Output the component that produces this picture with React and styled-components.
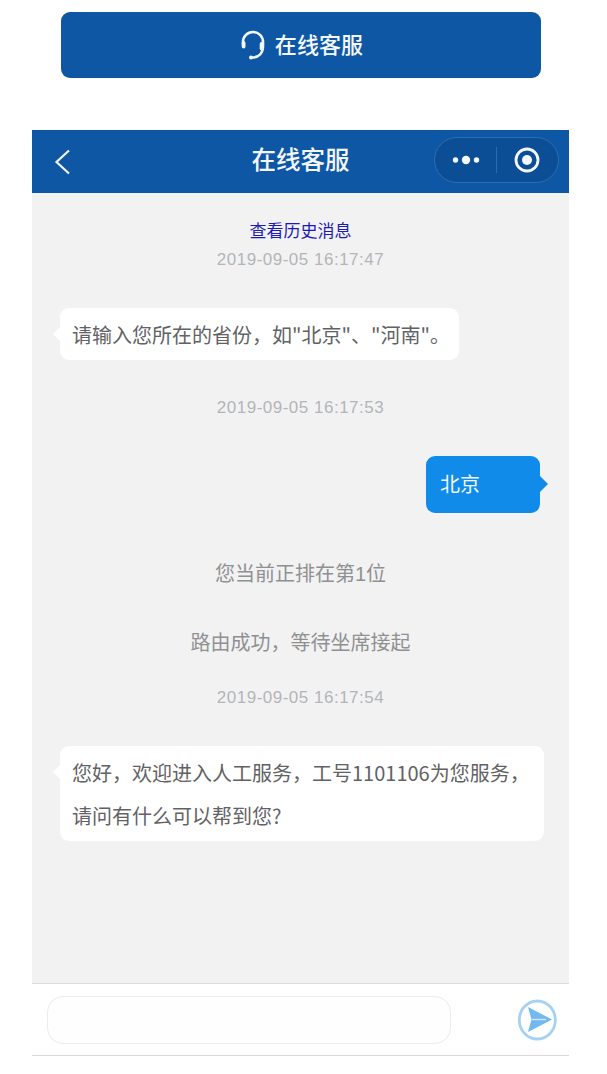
import React from "react";
import styled, { createGlobalStyle } from "styled-components";

const COMMA = "\uFF0C";

const Global = createGlobalStyle`
  html, body { margin: 0; padding: 0; background: #fff; }
  body { font-family: "Liberation Sans", "Noto Sans CJK SC", sans-serif; }
  * { box-sizing: border-box; }
`;
const Page = styled.div`
  width: 607px; height: 1074px; overflow: hidden; display: flex; flex-direction: column; align-items: flex-start; background: #fff;
  padding-top: 12px;
`;
const TopButton = styled.div`
  width: 480px; height: 66px; margin-left: 61px; background: #0e57a5; border-radius: 9px; display: flex; align-items: center; justify-content: center; gap: 10px;
  color: #f4f7fb; font: 500 22px/30px "Noto Sans CJK SC", sans-serif;
`;
const ButtonLabel = styled.span`
  display: block; margin-bottom: 5px; letter-spacing: 0.1px;
`;
const HeadsetIcon = styled.svg`
  width: 26px; height: 30px; flex: none;
`;
const Phone = styled.div`
  width: 537px; height: 926px; margin-top: 52px; margin-left: 32px; display: flex; flex-direction: column;
`;
const Nav = styled.div`
  height: 63px; background: #0e57a5; display: flex; align-items: center; position: relative; flex: none;
`;
const Back = styled.svg`
  margin-left: 22px; width: 18px; height: 28px; flex: none; margin-top: 1px;
`;
const NavTitle = styled.div`
  position: absolute; left: 0; right: 0; top: 11px; text-align: center; color: #f3f6fa;
  font: 500 24.5px/36px "Noto Sans CJK SC", sans-serif;
`;
const Capsule = styled.div`
  margin-left: auto; margin-right: 10px; margin-top: -4px; width: 125px; height: 46px; border-radius: 23px; background: #0c4e95; border: 1px solid #2b6cb0;
  display: flex; align-items: center; position: relative;
`;
const Dots = styled.svg`
  width: 61px; height: 44px; flex: none;
`;
const Divider = styled.div`
  width: 1px; height: 26px; background: #2d6bad; flex: none;
`;
const Target = styled.svg`
  width: 61px; height: 44px; flex: none;
`;
const Chat = styled.div`
  flex: 1; background: #f2f2f3; display: flex; flex-direction: column; align-items: center; padding-top: 26px; position: relative;
`;
const HistoryLink = styled.div`
  color: #1a1ab4; font: 400 17px/22px "Noto Sans CJK SC", sans-serif; height: 22px;
`;
const Time = styled.div`
  color: #b3b5b8; font: 400 17px/24px "Liberation Sans", sans-serif; letter-spacing: 0.5px; height: 24px; margin-top: ${p => p.$mt}px;
`;
const LeftBubble = styled.div`
  align-self: flex-start; margin-left: 28px; margin-top: ${p => p.$mt}px; width: ${p => p.$w}px; background: #fff; border-radius: 9px; color: #626265;
  font: 400 20px/43px "Noto Sans CJK SC", "Liberation Sans", sans-serif; padding: 4.5px 0 4.5px 12px; position: relative; white-space: nowrap;
  &::before {
    content: ""; position: absolute; left: -7px; top: ${p => p.$arrow}px; border: 7px solid transparent; border-left: 0; border-right: 7px solid #fff;
  }
`;
const RightBubble = styled.div`
  align-self: flex-end; margin-right: 29px; margin-top: 36px; width: 114px; height: 57px; background: #118bea; border-radius: 9px; color: #f1f8fe;
  font: 400 20px/56px "Noto Sans CJK SC", sans-serif; padding-left: 14px; position: relative;
  &::after {
    content: ""; position: absolute; right: -8px; top: 20px; border: 8px solid transparent; border-right: 0; border-left: 8px solid #118bea;
  }
`;
const System = styled.div`
  color: #8f9092; font: 400 20px/30px "Liberation Sans", "Noto Sans CJK SC", sans-serif; height: 30px; margin-top: ${p => p.$mt}px;
`;
const InputBar = styled.div`
  height: 73px; flex: none; background: #fff; border-top: 1px solid #dcdbde; border-bottom: 1px solid #d9d9db; display: flex; align-items: center; padding-left: 15px;
`;
const Field = styled.div`
  width: 404px; height: 48px; border: 1px solid #ebebee; border-radius: 16px; background: #fefefe; margin-top: 1px;
`;
const Send = styled.svg`
  width: 42px; height: 42px; margin-left: 64px; margin-top: 1px; flex: none;
`;

export default function App() {
  return (
    <Page>
      <Global />
      <TopButton>
        <HeadsetIcon viewBox="0 0 26 30" fill="none" stroke="#f4f7fb" strokeWidth="2.6" strokeLinecap="round">
          <path d="M4 14 V12 A10 10 0 0 1 24 12 V16 C24 23 20 27.5 13 27.5" />
          <path d="M4.6 13 V16.5" strokeWidth="3.8" />
          <path d="M22.6 14 V18.5" strokeWidth="3.8" />
          <circle cx="12" cy="27.5" r="2" fill="#f4f7fb" stroke="none" />
        </HeadsetIcon>
        <ButtonLabel>在线客服</ButtonLabel>
      </TopButton>
      <Phone>
        <Nav>
          <Back viewBox="0 0 18 28" fill="none" stroke="#f3f6fa" strokeWidth="2.2">
            <path d="M15 2.5 L2.5 14 L15 25.5" />
          </Back>
          <NavTitle>在线客服</NavTitle>
          <Capsule>
            <Dots viewBox="0 0 61 44" fill="#f4f7fb">
              <circle cx="20.5" cy="22" r="2.7" />
              <circle cx="31" cy="22" r="4.2" />
              <circle cx="41.5" cy="22" r="2.7" />
            </Dots>
            <Divider />
            <Target viewBox="0 0 61 44" fill="none">
              <circle cx="30" cy="22" r="11" stroke="#f4f7fb" strokeWidth="2.8" />
              <circle cx="30" cy="22" r="5" fill="#f4f7fb" />
            </Target>
          </Capsule>
        </Nav>
        <Chat>
          <HistoryLink>查看历史消息</HistoryLink>
          <Time $mt={7}>2019-09-05 16:17:47</Time>
          <LeftBubble $mt={36} $w={399} $arrow={19}>{`请输入您所在的省份${COMMA}如"北京"、"河南"。`}</LeftBubble>
          <Time $mt={36}>2019-09-05 16:17:53</Time>
          <RightBubble>北京</RightBubble>
          <System $mt={46}>您当前正排在第1位</System>
          <System $mt={39}>{`路由成功${COMMA}等待坐席接起`}</System>
          <Time $mt={28}>2019-09-05 16:17:54</Time>
          <LeftBubble $mt={36} $w={484} $arrow={19}>
            {`您好${COMMA}欢迎进入人工服务${COMMA}工号1101106为您服务${COMMA}`}
            <br />
            请问有什么可以帮到您?
          </LeftBubble>
        </Chat>
        <InputBar>
          <Field />
          <Send viewBox="0 0 42 42" fill="none">
            <ellipse cx="22.3" cy="21" rx="18" ry="19" stroke="#a5d2f2" strokeWidth="2.8" />
            <path d="M13 8 L37 20.5 L13 33 L16.5 20.5 Z" fill="#72b9ef" />
            <path d="M16.5 20.5 H31" stroke="#cfe7fa" strokeWidth="1.4" />
          </Send>
        </InputBar>
      </Phone>
    </Page>
  );
}
